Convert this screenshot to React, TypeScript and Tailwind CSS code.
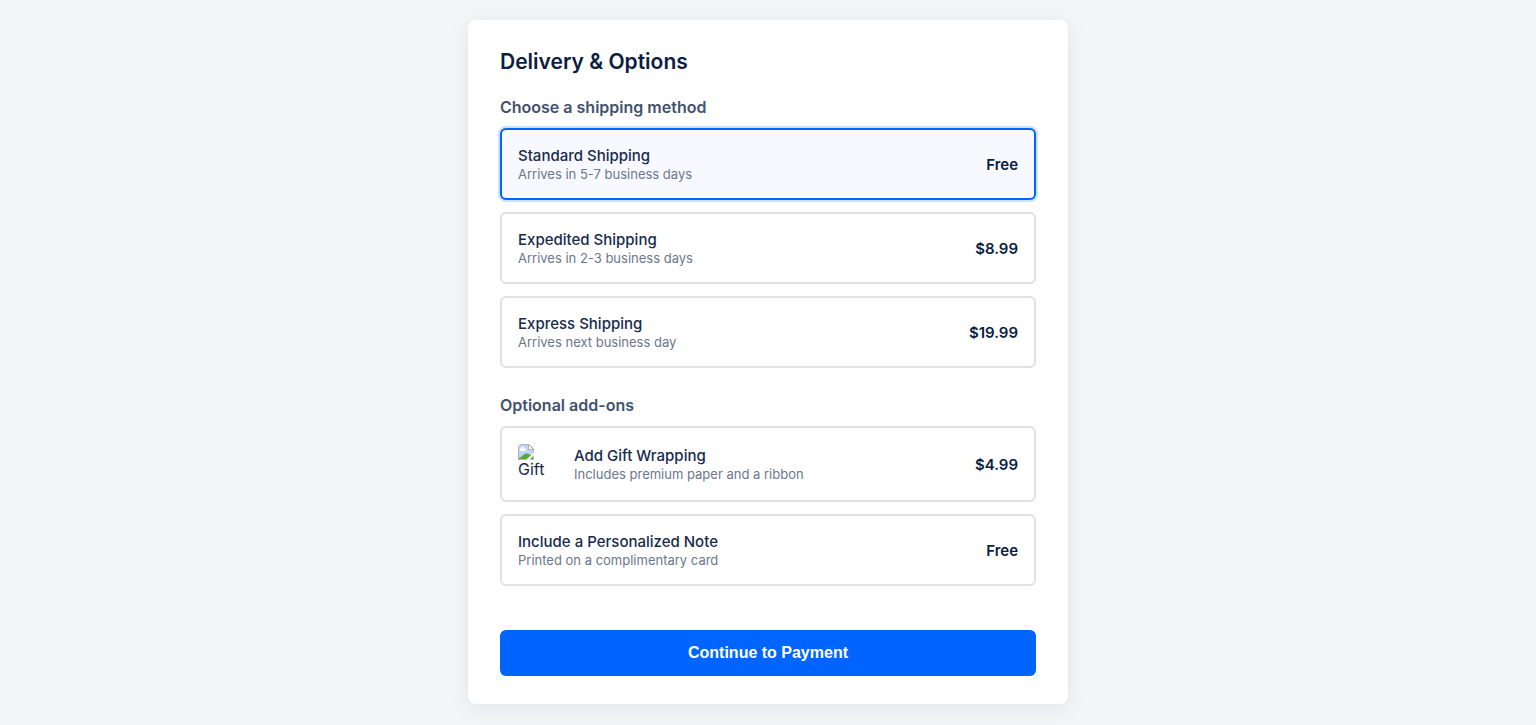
import { useState } from "react";
import type { ReactNode } from "react";

type Option = {
  id: string;
  name: string;
  description: string;
  price: string;
  picture?: ReactNode;
};

function GiftPicture() {
  return (
    <div className="h-10 w-10 shrink-0 overflow-hidden rounded">
      <svg className="block h-4 w-4" viewBox="0 0 16 16" aria-hidden="true">
        <path d="M0.5 0.5H11L15.5 5V15.5H0.5Z" fill="#c3d4f7" />
        <path d="M2.6 7a1.5 1.5 0 0 1 .3-2.9a2 2 0 0 1 3.8.4a1.3 1.3 0 0 1 .3 2.5Z" fill="#fff" />
        <path d="M1 15V14C4 13 5.5 9.5 8.5 9.5C11 9.5 13 11 15 12V15Z" fill="#54ad3b" />
        <path d="M0.5 16V0.5H11L15.5 5V9M0.5 15.5H9" fill="none" stroke="#b0b0b0" />
        <path d="M10.5 0.5V5.5H15.5Z" fill="#fff" stroke="#b0b0b0" />
        <path d="M16 8.5L8 16H11L16 11.5Z" fill="#fff" />
        <path d="M12.5 15.5H15.5V12.5" fill="none" stroke="#b0b0b0" />
      </svg>
      <span className="block text-base leading-[18px]">Gift</span>
    </div>
  );
}

const shippingMethods: Option[] = [
  { id: "standard", name: "Standard Shipping", description: "Arrives in 5-7 business days", price: "Free" },
  { id: "expedited", name: "Expedited Shipping", description: "Arrives in 2-3 business days", price: "$8.99" },
  { id: "express", name: "Express Shipping", description: "Arrives next business day", price: "$19.99" },
];

const addOns: Option[] = [
  {
    id: "gift",
    name: "Add Gift Wrapping",
    description: "Includes premium paper and a ribbon",
    price: "$4.99",
    picture: <GiftPicture />,
  },
  { id: "note", name: "Include a Personalized Note", description: "Printed on a complimentary card", price: "Free" },
];

type OptionCardProps = {
  option: Option;
  type: "radio" | "checkbox";
  group: string;
  checked: boolean;
  onChange: () => void;
};

function OptionCard({ option, type, group, checked, onChange }: OptionCardProps) {
  return (
    <label
      htmlFor={option.id}
      className="relative flex cursor-pointer items-center gap-4 rounded-md border-2 border-[#dfe1e6] p-4 has-checked:border-[#0065ff] has-checked:bg-[#f8f9ff] has-checked:shadow-[0_0_0_2px_rgba(0,101,255,0.2)]"
    >
      <input id={option.id} type={type} name={group} checked={checked} onChange={onChange} className="sr-only" />
      {option.picture}
      <span className="flex flex-1 flex-col">
        <span className="text-[15px] leading-5 font-medium">{option.name}</span>
        <span className="text-[13px] leading-4 text-[#6b778c]">{option.description}</span>
      </span>
      <span className="pt-0.5 text-[15px] leading-[18px] font-semibold text-[#091e42]">{option.price}</span>
    </label>
  );
}

export default function App() {
  const [method, setMethod] = useState("standard");
  const [extras, setExtras] = useState<string[]>([]);

  const toggleExtra = (id: string) =>
    setExtras((current) => (current.includes(id) ? current.filter((item) => item !== id) : [...current, id]));

  return (
    <main className="flex min-h-screen items-start justify-center bg-[#f4f5f7] p-5 font-['Inter',sans-serif] text-[#172b4d]">
      <form
        onSubmit={(event) => event.preventDefault()}
        className="w-full max-w-[600px] rounded-lg bg-white px-8 py-7 shadow-[0_4px_20px_rgba(9,30,66,0.08)]"
      >
        <h1 className="mb-5 text-[21px] leading-7 font-semibold text-[#091e42]">Delivery &amp; Options</h1>

        <fieldset className="mb-[26px]">
          <legend className="mb-2.5 text-base leading-[22px] font-semibold text-[#42526e]">
            Choose a shipping method
          </legend>
          <div className="flex flex-col gap-3">
            {shippingMethods.map((option) => (
              <OptionCard
                key={option.id}
                option={option}
                type="radio"
                group="shipping"
                checked={method === option.id}
                onChange={() => setMethod(option.id)}
              />
            ))}
          </div>
        </fieldset>

        <fieldset className="mb-11">
          <legend className="mb-2.5 text-base leading-[22px] font-semibold text-[#42526e]">Optional add-ons</legend>
          <div className="flex flex-col gap-3">
            {addOns.map((option) => (
              <OptionCard
                key={option.id}
                option={option}
                type="checkbox"
                group="extras"
                checked={extras.includes(option.id)}
                onChange={() => toggleExtra(option.id)}
              />
            ))}
          </div>
        </fieldset>

        <button
          type="submit"
          className="w-full cursor-pointer rounded-md bg-[#0065ff] py-3.5 font-['Liberation_Sans',Arial,sans-serif] text-base leading-[18px] font-bold text-white"
        >
          Continue to Payment
        </button>
      </form>
    </main>
  );
}
